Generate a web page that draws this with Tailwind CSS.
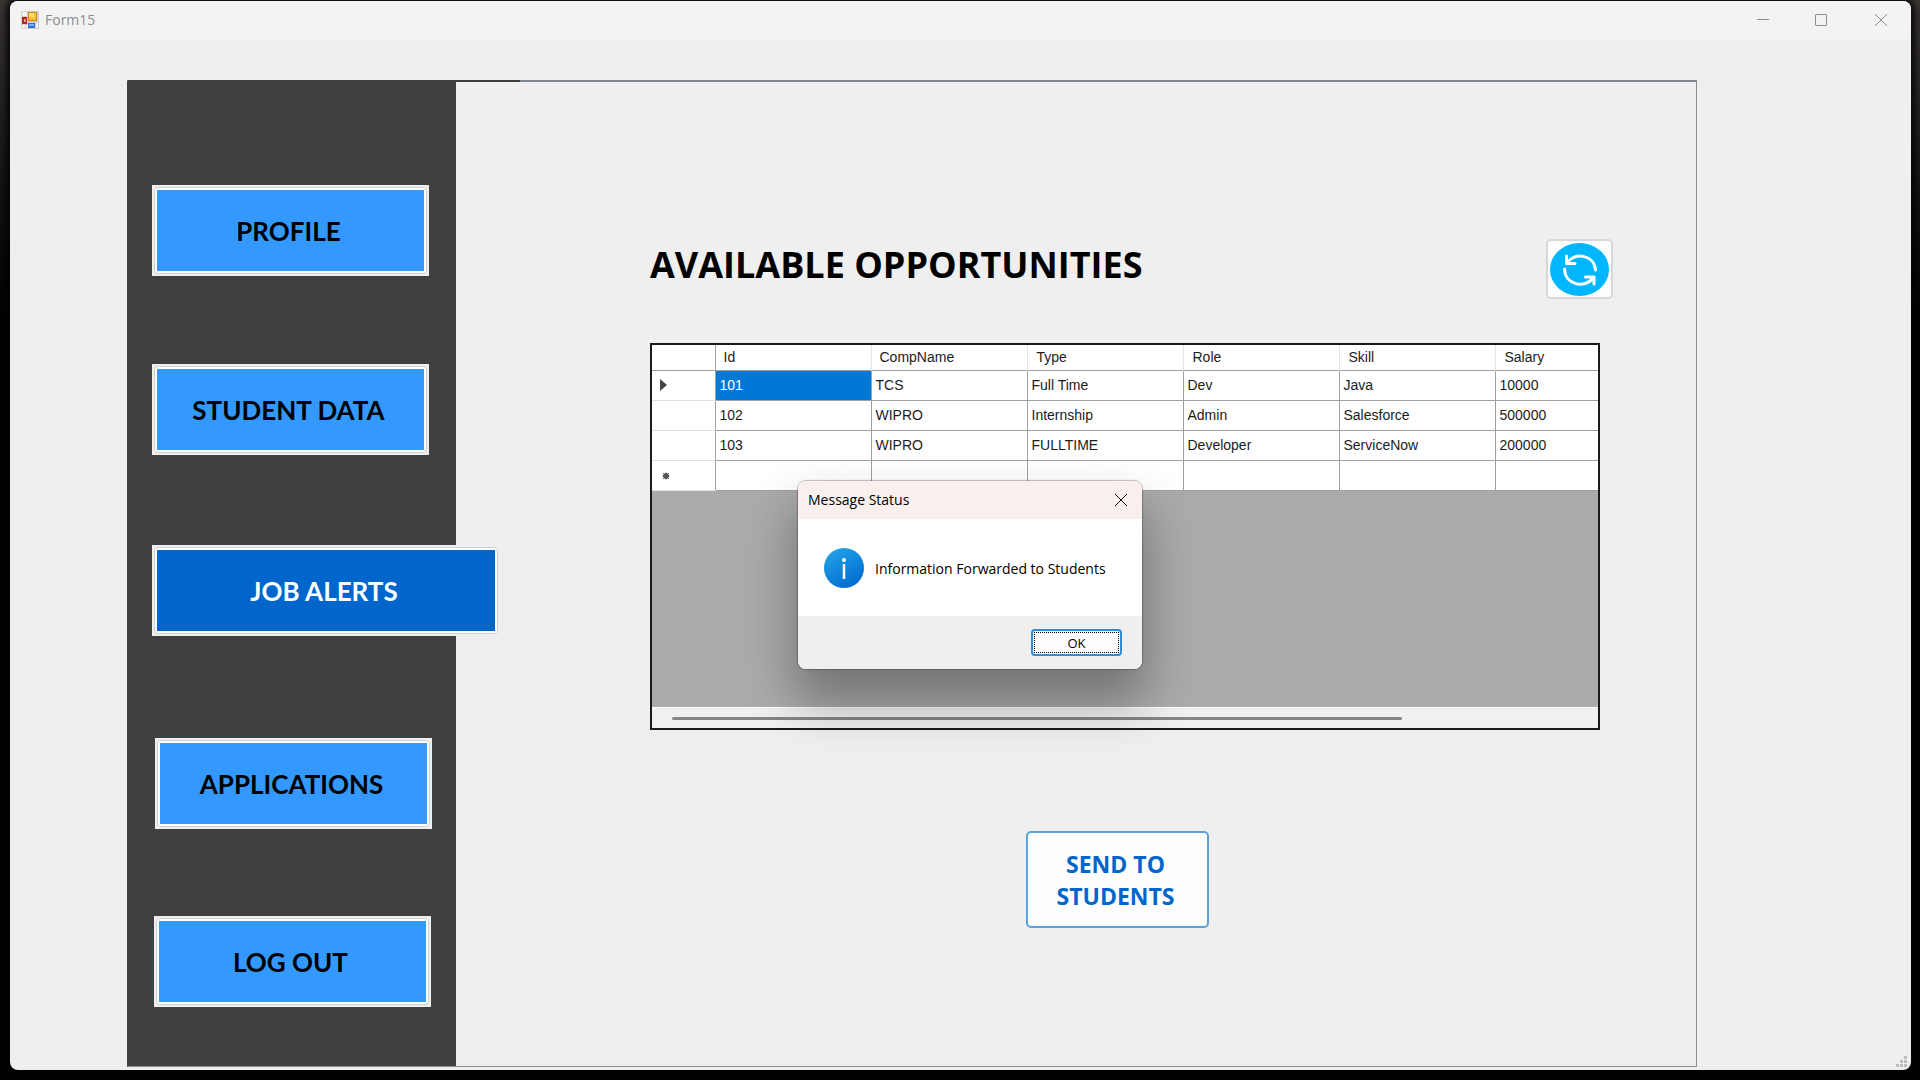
<!DOCTYPE html>
<html lang="en">
<head>
<meta charset="utf-8">
<meta name="viewport" content="width=device-width, initial-scale=1">
<title>Form15</title>
<script src="https://cdn.jsdelivr.net/npm/@tailwindcss/browser@4"></script>
</head>
<body class="flex min-h-screen bg-black bg-linear-to-b from-[#3a3735] to-black to-40% pt-px pr-[9px] pb-[10px] pl-2.5 font-['Open_Sans',sans-serif] text-black">
<div class="relative flex grow flex-col overflow-hidden rounded-lg bg-[#efefef] shadow-[0_0_8px_3px_#000]">

  <header class="flex h-[38px] shrink-0 items-center bg-[#f3f3f3] pl-[11px] text-[#8d8d8d]">
    <svg class="size-[18px]" viewBox="0 0 18 18" aria-hidden="true">
      <rect width="18" height="18" fill="#cfcfcf"/>
      <rect x="1" y="1" width="5" height="4" fill="#f3f3f3"/><rect x="1" y="14" width="3" height="3" fill="#f3f3f3"/><rect x="5" y="14" width="2" height="3" fill="#f3f3f3"/><rect x="15" y="12" width="2" height="5" fill="#f3f3f3"/>
      <rect x="1" y="6" width="5" height="7" fill="#b3261c"/><rect x="3" y="8" width="2" height="3" fill="#e89a90"/>
      <rect x="7" y="1" width="9" height="9" fill="#c58a08"/><rect x="8" y="2" width="7" height="7" fill="#f9c52c"/><rect x="8" y="2" width="5" height="4" fill="#fddf7c"/>
      <rect x="7" y="12" width="7" height="5" fill="#2e6fd8"/><rect x="8" y="13" width="5" height="2" fill="#79aef8"/>
    </svg>
    <h1 class="ml-1.5 grow text-sm">Form15</h1>
    <button type="button" aria-label="Minimize" class="flex h-full w-[58px] items-center justify-center"><svg class="size-3" viewBox="0 0 12 12" stroke="currentColor"><path d="M0 5.5h12"/></svg></button>
    <button type="button" aria-label="Maximize" class="flex h-full w-[58px] items-center justify-center"><svg class="size-3" viewBox="0 0 12 12" fill="none" stroke="currentColor"><rect x=".5" y=".5" width="11" height="11" rx=".5"/></svg></button>
    <button type="button" aria-label="Close" class="flex h-full w-[61px] items-center justify-center"><svg class="size-3" viewBox="0 0 12 12" stroke="currentColor"><path d="M0 0l12 12M12 0L0 12"/></svg></button>
  </header>

  <div class="mt-[41px] mr-[214px] mb-[3px] ml-[117px] flex grow border border-[#8a8f96] border-t-2 border-t-[#80868f] border-l-[#404040]">
    <nav class="-mt-0.5 flex w-[328px] shrink-0 flex-col items-start bg-[#404040] pt-[105px] pl-6 font-['Lato',sans-serif] text-[26px] leading-8 font-bold">
      <button type="button" class="mb-[88px] h-[91px] w-[277px] bg-[#efefef] p-0.5"><span class="flex h-full items-center justify-center rounded border border-[#d0d0d0] bg-white p-0.5"><span class="flex h-full grow items-center justify-center bg-[#3399ff] pr-1">PROFILE</span></span></button>
      <button type="button" class="mb-[90px] h-[91px] w-[277px] bg-[#efefef] p-0.5"><span class="flex h-full items-center justify-center rounded border border-[#d0d0d0] bg-white p-0.5"><span class="flex h-full grow items-center justify-center bg-[#3399ff] pr-1">STUDENT DATA</span></span></button>
      <button type="button" class="relative mb-[102px] h-[91px] w-[348px] rounded-r bg-[#efefef] p-0.5"><span class="flex h-full items-center justify-center rounded border border-[#d0d0d0] bg-white p-0.5"><span class="flex h-full grow items-center justify-center bg-[#0066cc] pr-1 text-white">JOB ALERTS</span></span></button>
      <button type="button" class="mb-[87px] ml-[3px] h-[91px] w-[277px] bg-[#efefef] p-0.5"><span class="flex h-full items-center justify-center rounded border border-[#d0d0d0] bg-white p-0.5"><span class="flex h-full grow items-center justify-center bg-[#3399ff] pr-1">APPLICATIONS</span></span></button>
      <button type="button" class="ml-0.5 h-[91px] w-[277px] bg-[#efefef] p-0.5"><span class="flex h-full items-center justify-center rounded border border-[#d0d0d0] bg-white p-0.5"><span class="flex h-full grow items-center justify-center bg-[#3399ff] pr-1">LOG OUT</span></span></button>
    </nav>

    <main class="relative flex min-w-0 grow flex-col pt-[157px] pr-[96px] pl-[194px]">
      <div class="absolute -top-0.5 left-0 h-0.5 w-16 bg-[#404040]"></div>
      <div class="mb-11 flex h-[60px] items-start justify-between">
        <h2 class="mt-1 text-4xl leading-[44px] font-bold whitespace-nowrap">AVAILABLE OPPORTUNITIES</h2>
        <button type="button" aria-label="Refresh" class="-mr-[13px] flex h-[60px] w-[67px] items-center justify-center rounded-[5px] border-2 border-[#d8d8d8] bg-[#fdfdfd]">
          <svg class="h-[53px] w-[59px]" viewBox="0 0 59 53" fill="none" stroke="#fff" stroke-width="3" stroke-linecap="round" stroke-linejoin="round">
            <ellipse cx="29.500" cy="26.500" rx="29.500" ry="26.500" fill="#00b7ff" stroke="none"/>
            <path d="M17 20C24 9 44 11 45.500 27M14.500 26C15 42 35 46 43 35M16.500 13v7.500h8.500M35.500 34h8.500v7"/>
          </svg>
        </button>
      </div>

      <section aria-label="Opportunities" class="flex h-[387px] flex-col overflow-hidden border-2 border-[#1a1a1a] bg-[#ababab] font-['Liberation_Sans',sans-serif]">
        <table class="w-[999px] shrink-0 table-fixed border-collapse bg-white text-left text-sm leading-4 text-[#1c1c1c]">
          <colgroup><col class="w-[63px]"><col class="w-[156px]"><col class="w-[156px]"><col class="w-[156px]"><col class="w-[156px]"><col class="w-[156px]"><col class="w-[156px]"></colgroup>
          <thead>
            <tr class="h-[25px] border-b border-[#a0a0a0] *:font-normal">
              <th class="border-r border-[#a0a0a0]"></th>
              <th class="border-r border-[#e5e5e5] pl-2">Id</th><th class="border-r border-[#e5e5e5] pl-2">CompName</th><th class="border-r border-[#e5e5e5] pl-[9px]">Type</th><th class="border-r border-[#e5e5e5] pl-[9px]">Role</th><th class="border-r border-[#e5e5e5] pl-[9px]">Skill</th><th class="pl-[9px]">Salary</th>
            </tr>
          </thead>
          <tbody class="[&_td]:border-r [&_td]:border-b [&_td]:border-[#a0a0a0] [&_td]:pl-1 [&_th]:border-r [&_th]:border-b [&_th]:border-r-[#a0a0a0] [&_th]:border-b-[#e0e0e0]">
            <tr class="h-[30px]"><th class="pl-2"><svg class="h-3 w-2" viewBox="0 0 8 12" fill="#444"><path d="M0 0l7 6-7 6z"/></svg></th><td class="bg-[#0078d7] text-white">101</td><td>TCS</td><td>Full Time</td><td>Dev</td><td>Java</td><td>10000</td></tr>
            <tr class="h-[30px]"><th></th><td>102</td><td>WIPRO</td><td>Internship</td><td>Admin</td><td>Salesforce</td><td>500000</td></tr>
            <tr class="h-[30px]"><th></th><td>103</td><td>WIPRO</td><td>FULLTIME</td><td>Developer</td><td>ServiceNow</td><td>200000</td></tr>
            <tr class="h-[30px]"><th class="pt-0.5 pl-2.5"><svg class="size-2" viewBox="0 0 8 8" stroke="#555" stroke-width="1"><circle cx="4" cy="4" r="2.500" fill="#555"/><path d="M4 .5v7M.5 4h7M1.200 1.200l5.600 5.600M6.800 1.200L1.200 6.800"/></svg></th><td></td><td></td><td></td><td></td><td></td><td></td></tr>
          </tbody>
        </table>
        <div class="mt-auto flex h-[21px] items-center border-t border-white bg-[#f0f0f0] pl-5">
          <div class="h-[3px] w-[730px] rounded-full bg-[#858585]"></div>
        </div>
      </section>

      <button type="button" class="mt-[101px] ml-[376px] h-[97px] w-[183px] rounded-[5px] border-2 border-[#58a3dc] bg-[#fdfdfd] pr-1 text-[23px] leading-8 font-bold text-[#0066cc]">SEND TO<br>STUDENTS</button>
    </main>
  </div>

  <svg class="absolute right-1 bottom-[3px] size-[11px]" viewBox="0 0 11 11" fill="#bdbdbd" aria-hidden="true"><path d="M8 0h3v3h-3zM8 4h3v3h-3zM8 8h3v3h-3zM4 4h3v3h-3zM4 8h3v3h-3zM0 8h3v3h-3z"/></svg>

  <div role="dialog" aria-labelledby="status-title" class="absolute top-[480px] left-[788px] flex w-[344px] flex-col rounded-lg bg-white shadow-[0_0_1px_1px_#00000040,0_30px_50px_4px_#00000052]">
    <div class="flex h-[38px] items-center rounded-t-lg bg-[#f9f0ee] pl-2.5">
      <h3 id="status-title" class="grow text-sm">Message Status</h3>
      <button type="button" aria-label="Close message" class="flex h-full w-[42px] items-center justify-center"><svg class="size-3" viewBox="0 0 12 12" stroke="#111"><path d="M0 0l12 12M12 0L0 12"/></svg></button>
    </div>
    <div class="flex h-[97px] items-center pl-[26px]">
      <svg class="size-10 shrink-0" viewBox="0 0 40 40" aria-hidden="true">
        <defs><linearGradient id="info" x1=".2" y1="0" x2=".8" y2="1"><stop stop-color="#22a3e6"/><stop offset="1" stop-color="#0069cf"/></linearGradient></defs>
        <circle cx="20" cy="20" r="20" fill="url(#info)"/><circle cx="20" cy="12" r="2" fill="#fff"/><path d="M20 16v15" stroke="#fff" stroke-width="2.500"/>
      </svg>
      <p class="ml-[11px] pt-0.5 text-sm whitespace-nowrap">Information Forwarded to Students</p>
    </div>
    <div class="flex h-[53px] items-center justify-end rounded-b-lg bg-[#efefef] pr-5">
      <button type="button" class="h-[27px] w-[91px] rounded border-2 border-[#2d8bd8] bg-[#fdfdfd] p-px text-[13px] leading-4"><span class="flex h-full items-center justify-center border border-dotted border-black">OK</span></button>
    </div>
  </div>
</div>
</body>
</html>
